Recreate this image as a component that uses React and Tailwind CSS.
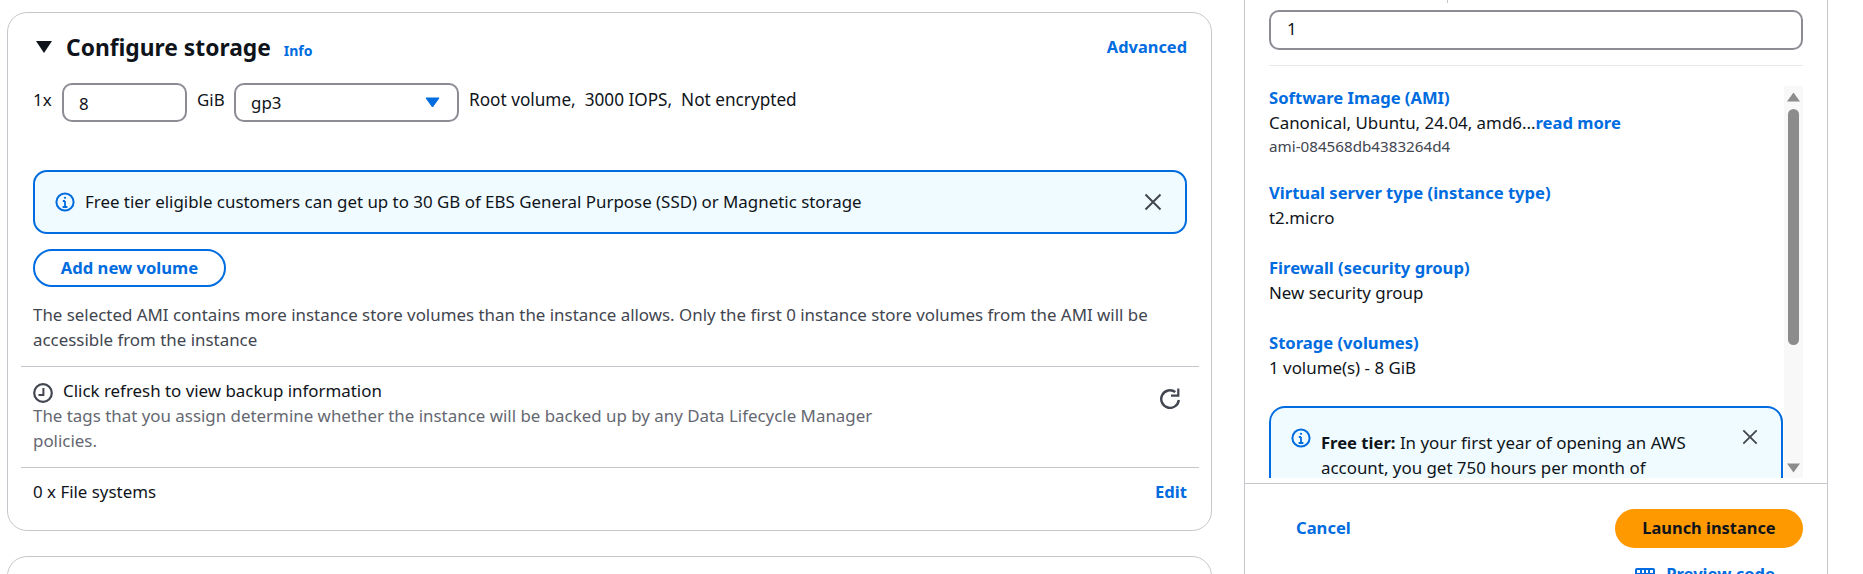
const font = { fontFamily: '"Noto Sans", sans-serif' };

function InfoIcon({ className }) {
  return (
    <svg viewBox="0 0 20 20" className={className} fill="none" stroke="#006ce0" strokeWidth="2">
      <circle cx="10" cy="10" r="8.6" />
      <path d="M10 9v6M7.6 15h4.8M7.8 9H10" strokeWidth="1.8" />
      <circle cx="10" cy="5.8" r="1.1" fill="#006ce0" stroke="none" />
    </svg>
  );
}

function CloseIcon({ className }) {
  return (
    <svg viewBox="0 0 18 18" className={className} fill="none" stroke="#424650" strokeWidth="2">
      <path d="M1.5 1.5l15 15M16.5 1.5l-15 15" />
    </svg>
  );
}

function Item({ title, children }) {
  return (
    <div className="mb-[25px]">
      <div className="text-[16.6px] font-bold leading-[25px] text-[#006ce0]">{title}</div>
      {children}
    </div>
  );
}

export default function App() {
  return (
    <div className="flex h-[574px] w-[1863px] overflow-hidden bg-white text-[16.9px] leading-[25px] text-[#0f141a]" style={font}>
      <main className="ml-[7px] w-[1205px] shrink-0 pt-[12px]">
        <section className="h-[519px] rounded-[20px] border border-[#c6c6cd] pl-[25px] pr-[24px] pt-[20px]">
          <div className="flex h-[30px] items-center justify-between">
            <div className="flex items-center">
              <svg viewBox="0 0 16 12" className="-mt-[2px] ml-[3px] h-[12px] w-[16px]">
                <path d="M0 0h16L8 12z" fill="#0f141a" />
              </svg>
              <h2 className="ml-[14px] text-[22.8px] font-bold leading-[30px]">Configure storage</h2>
              <span className="ml-[13px] mt-[4px] text-[14px] font-bold text-[#006ce0]">Info</span>
            </div>
            <span className="mt-[2px] self-start text-[16.4px] font-bold leading-[24px] text-[#006ce0]">Advanced</span>
          </div>

          <div className="mt-[20px] flex h-[39px]">
            <span className="w-[29px] leading-[33px]">1x</span>
            <div className="h-[39px] w-[125px] rounded-[10px] border-2 border-[#8c8c94] pl-[15px] leading-[37px]">8</div>
            <span className="ml-[10px] w-[37px] leading-[33px]">GiB</span>
            <div className="flex h-[39px] w-[225px] items-center justify-between rounded-[10px] border-2 border-[#8c8c94] pl-[15px] pr-[17px]">
              <span>gp3</span>
              <svg viewBox="0 0 15 11" className="h-[11px] w-[15px]">
                <path d="M1 1h13L7.5 10z" fill="#006ce0" stroke="#006ce0" strokeLinejoin="round" />
              </svg>
            </div>
            <span className="ml-[10px] whitespace-pre text-[17.2px] leading-[33px]">Root volume,  3000 IOPS,  Not encrypted</span>
          </div>

          <div className="mt-[48px] flex h-[64px] items-center rounded-[14px] border-2 border-[#006ce0] bg-[#f0fbff] pl-[20px] pr-[23px]">
            <InfoIcon className="h-[20px] w-[20px] shrink-0" />
            <span className="-mt-[2px] ml-[10px] flex-1">Free tier eligible customers can get up to 30 GB of EBS General Purpose (SSD) or Magnetic storage</span>
            <CloseIcon className="h-[18px] w-[18px]" />
          </div>

          <button className="mt-[15px] block h-[38px] w-[193px] rounded-full border-2 border-[#006ce0] text-center text-[16.6px] font-bold leading-[32px] text-[#006ce0]">
            Add new volume
          </button>

          <p className="mt-[15px] text-[#424650]">
            The selected AMI contains more instance store volumes than the instance allows. Only the first 0 instance store volumes from the AMI will be accessible from the instance
          </p>

          <div className="-mx-[12px] mt-[14px] h-px bg-[#c6c6cd]" />

          <div className="mt-[11px] flex justify-between">
            <div className="w-[880px]">
              <div className="flex items-center">
                <svg viewBox="0 0 20 20" className="mt-[4px] h-[20px] w-[20px]" fill="none" stroke="#424650">
                  <circle cx="10" cy="10" r="8.8" strokeWidth="2.2" />
                  <path d="M10.4 5v7H5.5" strokeWidth="2" />
                </svg>
                <span className="ml-[10px]">Click refresh to view backup information</span>
              </div>
              <p className="text-[#656871]">
                The tags that you assign determine whether the instance will be backed up by any Data Lifecycle Manager policies.
              </p>
            </div>
            <svg viewBox="0 0 20 21" className="mr-[7px] mt-[10px] h-[21px] w-[20px]" fill="none" stroke="#424650" strokeWidth="2.4">
              <path d="M18.8 12a8.8 8.8 0 1 1-3.5-8" />
              <path d="M18.3 0.5v7.2H11" strokeWidth="2.2" />
            </svg>
          </div>

          <div className="-mx-[12px] mt-[14px] h-px bg-[#c6c6cd]" />

          <div className="mt-[11px] flex justify-between">
            <span>0 x File systems</span>
            <span className="text-[16.6px] font-bold text-[#006ce0]">Edit</span>
          </div>
        </section>
        <section className="mt-[25px] h-[60px] rounded-[20px] border border-[#c6c6cd]" />
      </main>

      <aside className="ml-[32px] flex h-[700px] w-[584px] shrink-0 flex-col border-x border-[#c6c6cd]">
        <div className="relative px-[24px] pt-[10px]">
          <div className="absolute left-[202px] top-0 h-[3px] w-px bg-[#c6c6cd]" />
          <div className="h-[40px] rounded-[10px] border-2 border-[#8c8c94] pl-[16px] leading-[34px]">1</div>
          <div className="mt-[15px] h-px bg-[#e8e8ea]" />
        </div>

        <div className="ml-[24px] mt-[20px] flex h-[392px] w-[534px] overflow-hidden">
          <div className="-mt-[1px] w-[514px] shrink-0">
            <Item title="Software Image (AMI)">
              <div>
                Canonical, Ubuntu, 24.04, amd6...<span className="text-[16.6px] font-bold text-[#006ce0]">read more</span>
              </div>
              <div className="-mb-[1px] mt-[1px] text-[15.2px] leading-[20px] text-[#424650]">ami-084568db4383264d4</div>
            </Item>
            <Item title="Virtual server type (instance type)">
              <div>t2.micro</div>
            </Item>
            <Item title="Firewall (security group)">
              <div>New security group</div>
            </Item>
            <Item title="Storage (volumes)">
              <div>1 volume(s) - 8 GiB</div>
            </Item>
            <div className="mt-[26px] flex h-[120px] rounded-[16px] border-2 border-[#006ce0] bg-[#f0fbff] pl-[20px] pr-[23px] pt-[20px]">
              <InfoIcon className="h-[20px] w-[20px] shrink-0" />
              <p className="ml-[10px] mt-[2px] flex-1 pr-[20px]">
                <b className="text-[16.6px]">Free tier:</b> In your first year of opening an AWS account, you get 750 hours per month of
              </p>
              <CloseIcon className="mt-[1px] h-[16px] w-[16px] shrink-0" />
            </div>
          </div>
          <div className="ml-px flex h-full w-[19px] shrink-0 flex-col items-center bg-[#f8f8f8]">
            <svg viewBox="0 0 13 10" className="mt-[6px] h-[10px] w-[13px]">
              <path d="M6.5 0.5L13 9.5H0z" fill="#8c8c8c" />
            </svg>
            <div className="mt-[7px] h-[236px] w-[11px] rounded-full bg-[#8c8c8c]" />
            <div className="flex-1" />
            <svg viewBox="0 0 13 10" className="mb-[5px] h-[10px] w-[13px]">
              <path d="M0 0.5h13L6.5 9.5z" fill="#8c8c8c" />
            </svg>
          </div>
        </div>

        <div className="mt-[5px] border-t border-[#c6c6cd] pl-[51px] pr-[24px] pt-[25px]">
          <div className="flex items-center justify-between">
            <span className="-mt-[2px] text-[16.6px] font-bold text-[#006ce0]">Cancel</span>
            <button className="h-[39px] w-[188px] rounded-full bg-[#ff9900] pb-[2px] text-[16.4px] font-bold text-[#0f141a]">Launch instance</button>
          </div>
          <div className="mt-[13px] flex justify-end pr-[28px]">
            <svg viewBox="0 0 20 18" className="mt-[7px] h-[18px] w-[20px]" fill="none" stroke="#006ce0" strokeWidth="2">
              <rect x="1" y="1" width="18" height="16" rx="1" />
              <path d="M1 6h18M6 1v5M10 1v5M14 1v5" />
            </svg>
            <span className="ml-[11px] text-[16.6px] font-bold text-[#006ce0]">Preview code</span>
          </div>
        </div>
      </aside>
    </div>
  );
}
